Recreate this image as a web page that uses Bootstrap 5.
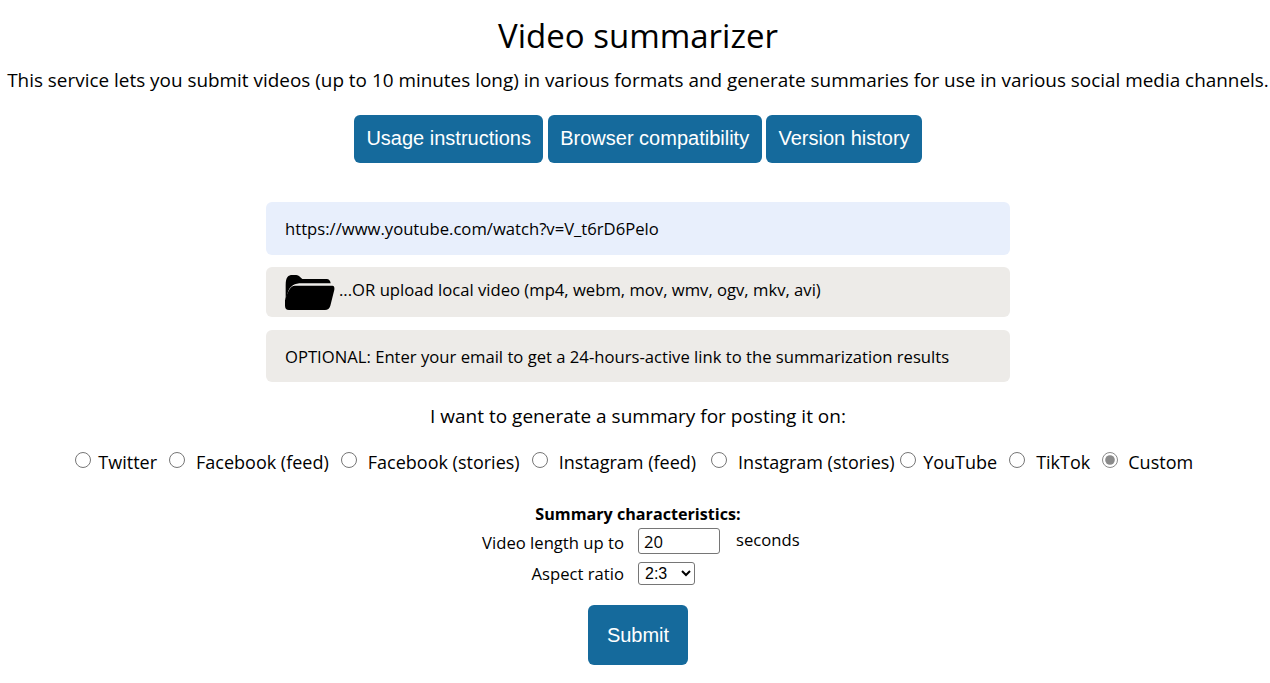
<!DOCTYPE html>
<html lang="en">
  <head>
    <meta charset="UTF-8" />
    <meta name="viewport" content="width=device-width, initial-scale=1.0" />
    <title>Video summarizer</title>
    <link href="https://cdn.jsdelivr.net/npm/bootstrap@5.3.0/dist/css/bootstrap.min.css" rel="stylesheet" />
    <style>
      body {
        font-family: "Open Sans", "Noto Sans", sans-serif;
        color: #000;
        background: #fff;
      }
      .page-wrap {
        padding-left: 6px;
      }
      .page-title {
        font-size: 33px;
        font-weight: 400;
        line-height: 48px;
        margin: 12px 0 0;
      }
      .page-intro {
        font-size: 18.91px;
        line-height: 26px;
        margin: 7px 0 0;
        white-space: nowrap;
      }
      .top-buttons {
        margin-top: 22px;
        gap: 4.5px;
      }
      .blue-button {
        background-color: #156a9c;
        border: 0;
        border-radius: 6px;
        color: #fff;
        font-family: "Liberation Sans", Arial, sans-serif;
        font-size: 20px;
        height: 48px;
        padding: 0 12.4px 2px;
      }
      .blue-button:hover {
        background-color: #105880;
        color: #fff;
      }
      .field-stack {
        width: 744px;
        margin: 39px auto 0;
      }
      .field-box {
        border-radius: 6px;
        font-size: 16.65px;
        padding: 0 18px 0 19px;
        display: flex;
        align-items: center;
      }
      .url-box {
        background: #e8effc;
        height: 53px;
        padding-top: 2px;
      }
      .file-box {
        background: #edebe8;
        height: 50px;
        margin-top: 12px;
      }
      .file-box span {
        margin-top: -3px;
      }
      .mail-box {
        background: #edebe8;
        height: 52px;
        margin-top: 13px;
        padding-top: 2px;
      }
      .folder-icon {
        width: 50px;
        height: 36px;
        margin: 2px 4px 0 0;
        flex: none;
      }
      .target-label {
        font-size: 19px;
        line-height: 26px;
        margin: 21px 0 0;
      }
      .target-row {
        margin-top: 20px;
        font-size: 18px;
        line-height: 26px;
        white-space: nowrap;
        padding-right: 8px;
      }
      .target-item {
        display: flex;
        align-items: flex-start;
        margin-right: 12px;
      }
      .target-item input {
        width: 16px;
        height: 16px;
        margin: 3px 11px 0 0;
        accent-color: #8a8a8a;
      }
      .target-item.near-label input {
        margin-right: 7.5px;
      }
      .target-item.wide-gap {
        margin-right: 15px;
      }
      .target-item.slim-gap {
        margin-right: 5px;
      }
      .target-item:last-child {
        margin-right: 0;
      }
      .target-item:last-child input {
        margin-right: 10px;
      }
      .char-title {
        font-size: 16.15px;
        font-weight: 700;
        line-height: 24px;
        margin-top: 27px;
      }
      .char-grid {
        display: grid;
        grid-template-columns: 145px auto;
        column-gap: 14px;
        width: 318px;
        margin: 0 auto;
        font-size: 16.65px;
      }
      .char-grid label {
        text-align: right;
        line-height: 24px;
        padding-top: 5px;
      }
      .char-grid label.ratio-label {
        padding-top: 7px;
      }
      .length-row {
        padding-top: 2px;
      }
      .length-input {
        width: 82px;
        height: 26px;
        border: 1px solid #767676;
        border-radius: 3px;
        font: 16.65px "Open Sans", sans-serif;
        padding: 0 5px;
      }
      .ratio-cell {
        padding-top: 6px;
      }
      .ratio-select {
        width: 57px;
        height: 23px;
        border: 1px solid #767676;
        border-radius: 3px;
        background: #fff;
        padding-left: 2px;
        font: 16px "Liberation Sans", Arial, sans-serif;
      }
      .submit-button {
        width: 100px;
        height: 60px;
        margin-top: 19px;
        padding: 0;
      }
    </style>
  </head>
  <body>
    <div class="page-wrap">
      <div class="text-center">
        <h1 class="page-title">Video summarizer</h1>
        <p class="page-intro">This service lets you submit videos (up to 10 minutes long) in various formats and generate summaries for use in various social media channels.</p>
        <div class="top-buttons d-flex justify-content-center">
          <button type="button" class="btn blue-button">Usage instructions</button>
          <button type="button" class="btn blue-button">Browser compatibility</button>
          <button type="button" class="btn blue-button">Version history</button>
        </div>
      </div>

      <div class="field-stack">
        <div class="field-box url-box">https://www.youtube.com/watch?v=V_t6rD6Pelo</div>
        <div class="field-box file-box">
          <svg class="folder-icon" viewBox="0 0 150 108" aria-hidden="true">
            <path d="M2 30C2 6 10 0 22 0H34C42 0 46 8 52 12H125C132 12 136 17 137 25H50C30 25 14 32 8 54L2 75Z" />
            <path d="M30 32H142C148 32 149 38 148 44L136 92C134 100 128 105 120 105H12C4 105 0 100 0 92V76C8 50 16 32 30 32Z" />
          </svg>
          <span>...OR upload local video (mp4, webm, mov, wmv, ogv, mkv, avi)</span>
        </div>
        <div class="field-box mail-box">OPTIONAL: Enter your email to get a 24-hours-active link to the summarization results</div>
      </div>

      <p class="target-label text-center">I want to generate a summary for posting it on:</p>
      <div class="target-row d-flex justify-content-center">
        <label class="target-item near-label"><input type="radio" name="target" />Twitter</label>
        <label class="target-item"><input type="radio" name="target" />Facebook (feed)</label>
        <label class="target-item"><input type="radio" name="target" />Facebook (stories)</label>
        <label class="target-item wide-gap"><input type="radio" name="target" />Instagram (feed)</label>
        <label class="target-item slim-gap"><input type="radio" name="target" />Instagram (stories)</label>
        <label class="target-item near-label"><input type="radio" name="target" />YouTube</label>
        <label class="target-item"><input type="radio" name="target" />TikTok</label>
        <label class="target-item"><input type="radio" name="target" checked />Custom</label>
      </div>

      <div class="char-title text-center">Summary characteristics:</div>
      <div class="char-grid">
        <label for="lengthInput">Video length up to</label>
        <div class="length-row d-flex align-items-start"><input id="lengthInput" class="length-input me-3" type="text" value="20" /><span class="mt-0">seconds</span></div>
        <label for="ratioSelect" class="ratio-label">Aspect ratio</label>
        <div class="ratio-cell"><select id="ratioSelect" class="ratio-select"><option>2:3</option></select></div>
      </div>

      <div class="text-center">
        <button type="button" class="btn blue-button submit-button">Submit</button>
      </div>
    </div>

    <script src="https://cdn.jsdelivr.net/npm/bootstrap@5.3.0/dist/js/bootstrap.bundle.min.js"></script>
  </body>
</html>
